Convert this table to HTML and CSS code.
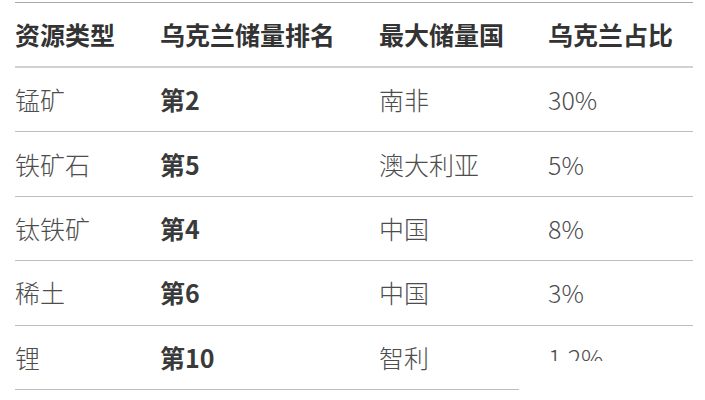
FILE: index.html
```html
<!DOCTYPE html>
<html lang="zh-CN">
<head>
<meta charset="utf-8">
<link rel="stylesheet" href="styles.css">
</head>
<body>
<div class="page">
  <div class="table">
    <div class="row head">
      <div class="cell">资源类型</div>
      <div class="cell">乌克兰储量排名</div>
      <div class="cell">最大储量国</div>
      <div class="cell">乌克兰占比</div>
    </div>
    <div class="row">
      <div class="cell">锰矿</div>
      <div class="cell rank">第2</div>
      <div class="cell">南非</div>
      <div class="cell">30%</div>
    </div>
    <div class="row">
      <div class="cell">铁矿石</div>
      <div class="cell rank">第5</div>
      <div class="cell">澳大利亚</div>
      <div class="cell">5%</div>
    </div>
    <div class="row">
      <div class="cell">钛铁矿</div>
      <div class="cell rank">第4</div>
      <div class="cell">中国</div>
      <div class="cell">8%</div>
    </div>
    <div class="row">
      <div class="cell">稀土</div>
      <div class="cell rank">第6</div>
      <div class="cell">中国</div>
      <div class="cell">3%</div>
    </div>
    <div class="row">
      <div class="cell">锂</div>
      <div class="cell rank">第10</div>
      <div class="cell">智利</div>
      <div class="cell">1.2%</div>
    </div>
  </div>
  <div class="cutoff"></div>
</div>
</body>
</html>
```
FILE: styles.css
```css
html, body {
  margin: 0;
  padding: 0;
  background: #ffffff;
}
.page {
  position: relative;
  width: 705px;
  height: 400px;
  overflow: hidden;
  font-family: "Noto Sans CJK SC", "Noto Sans", sans-serif;
}
.table {
  margin: 2px 0 0 15px;
  width: 678px;
  border-top: 1px solid #a9a9a9;
}
.row {
  display: grid;
  grid-template-columns: 145px 219px 169px 145px;
  align-items: center;
  height: 64.4px;
  box-sizing: border-box;
  border-bottom: 1px solid #bdbdbd;
  font-size: 25px;
  color: #4d4d4d;
  font-weight: 300;
}
.row.head {
  height: 65px;
  border-bottom: 2px solid #d2d2d2;
  font-weight: 700;
  color: #333333;
}
.cell {
  line-height: 1;
  white-space: nowrap;
}
.rank {
  font-weight: 700;
  color: #3a3a3a;
}
.cutoff {
  position: absolute;
  left: 519px;
  top: 361px;
  right: 0;
  bottom: 0;
  background: #ffffff;
}
```
